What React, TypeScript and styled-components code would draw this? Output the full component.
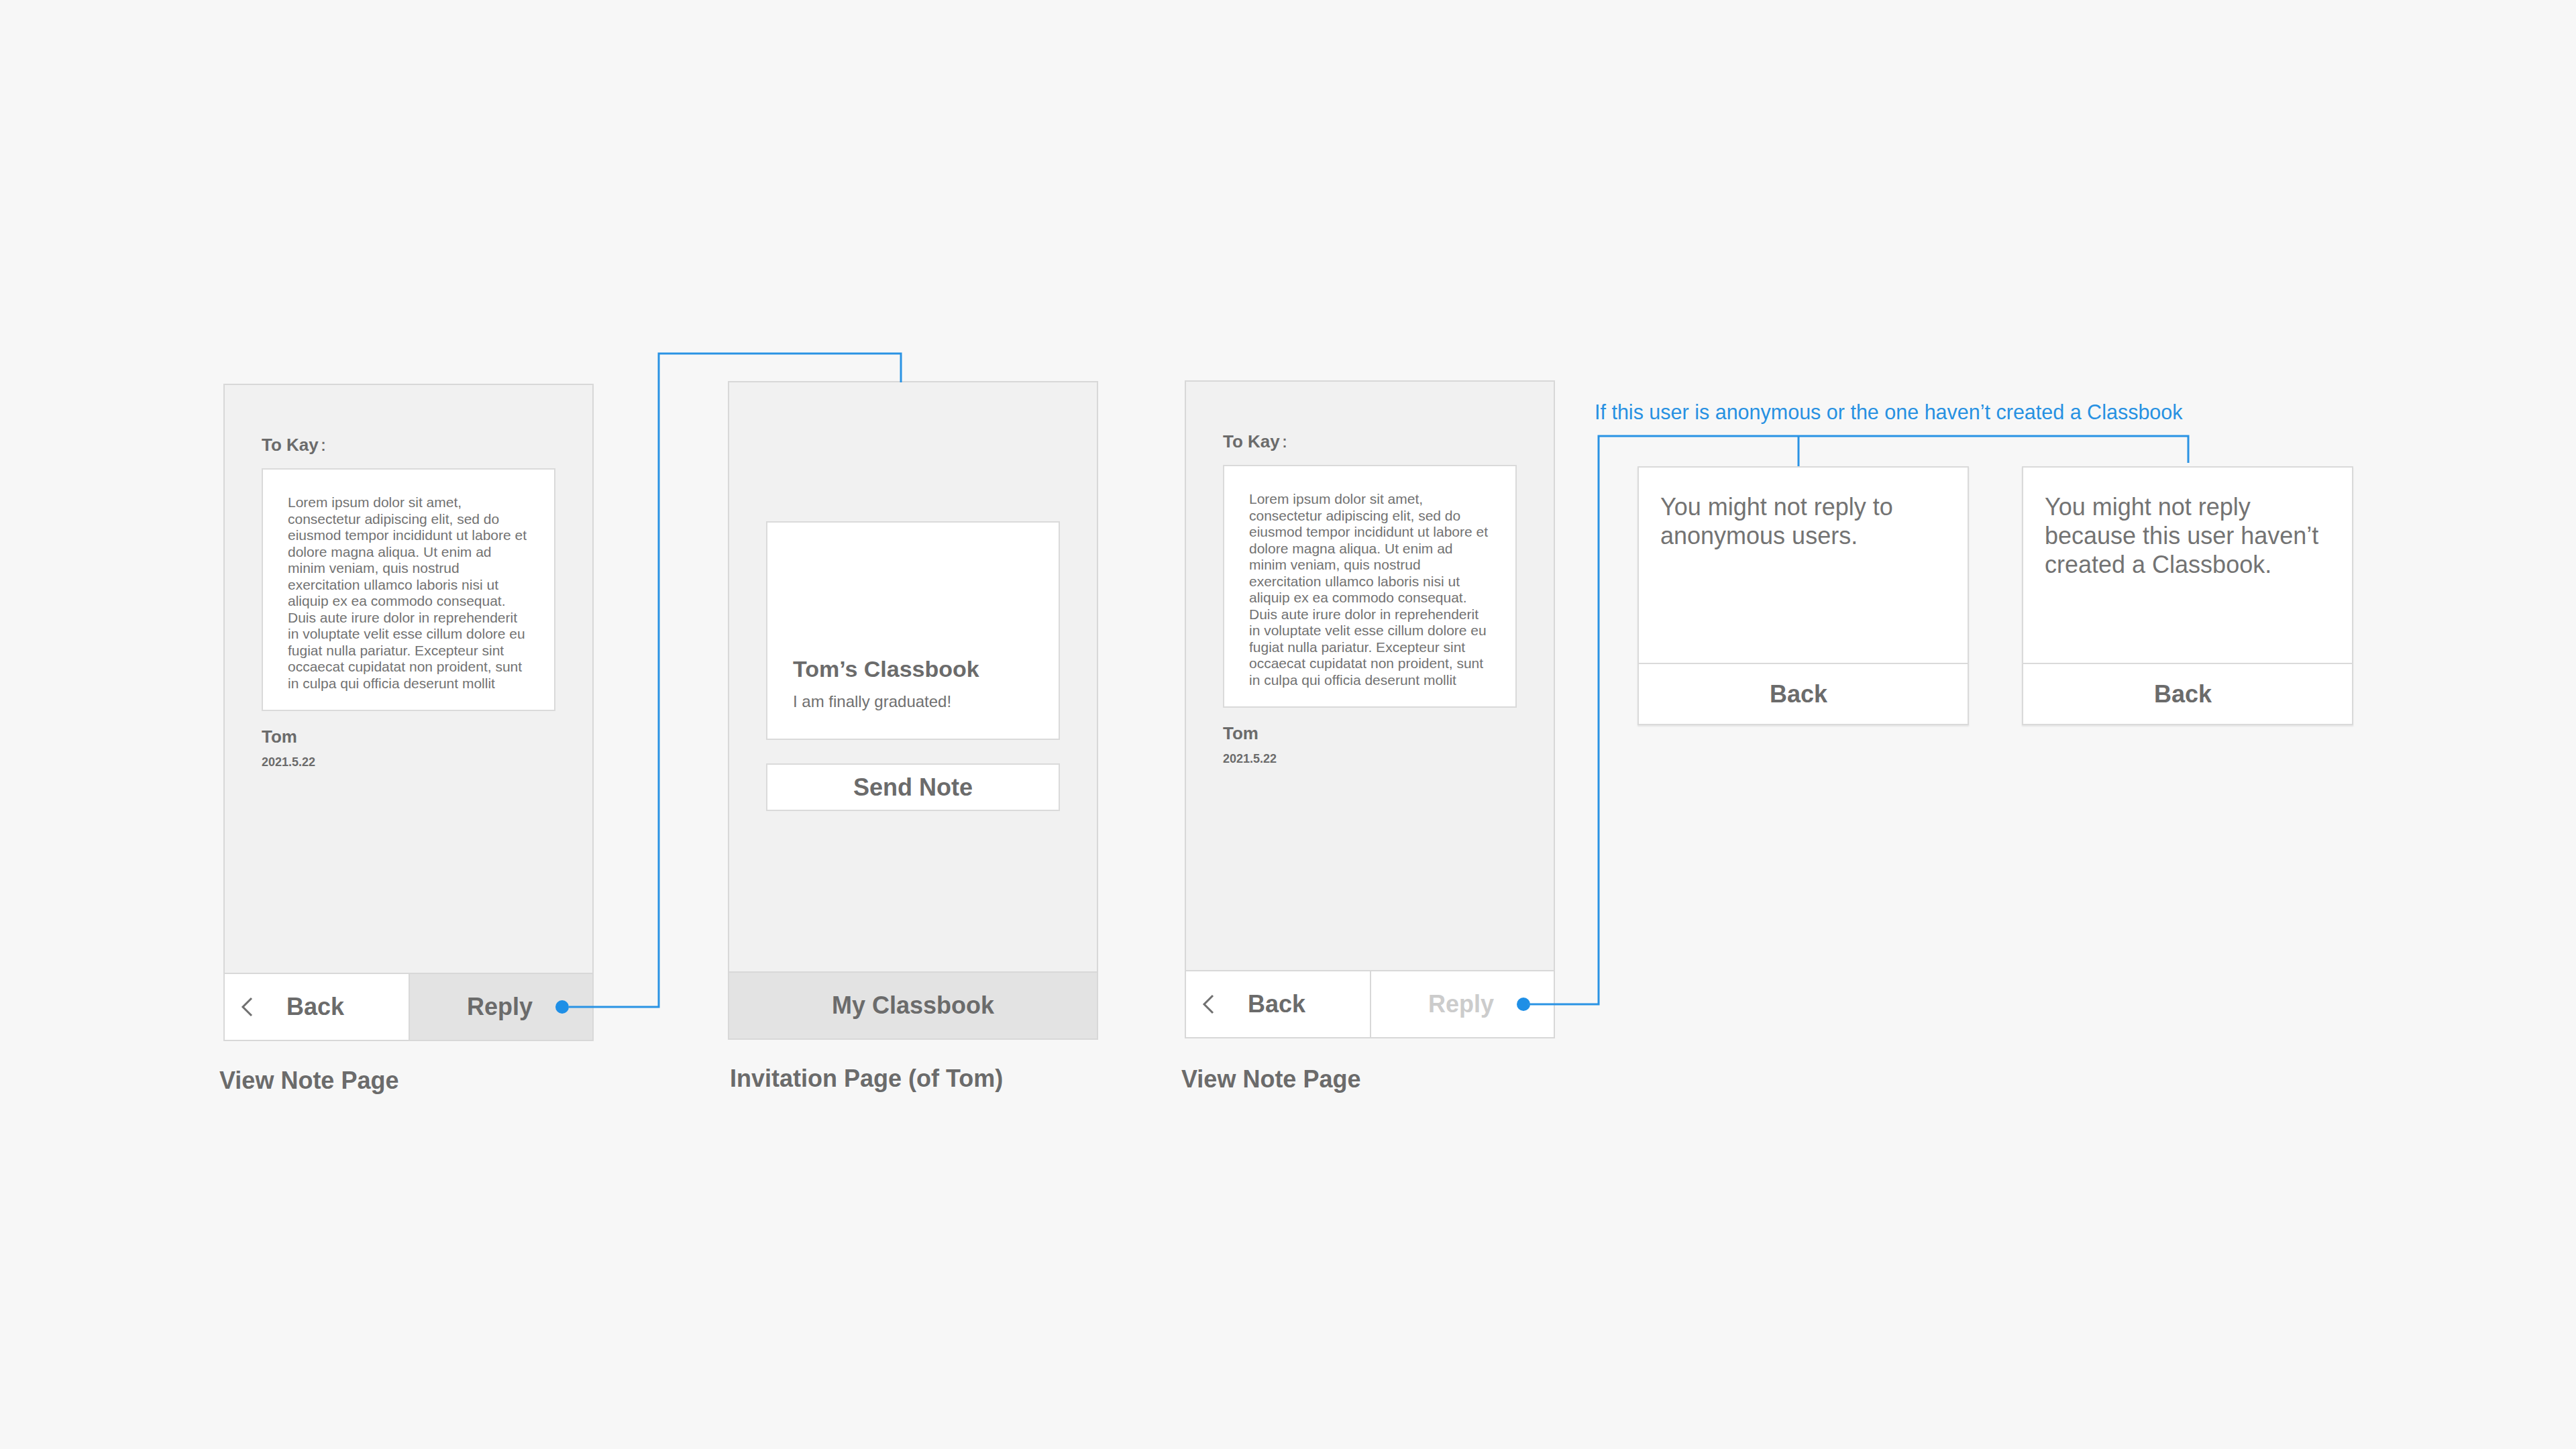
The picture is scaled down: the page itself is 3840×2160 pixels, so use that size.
import styled, { createGlobalStyle } from "styled-components";

const GlobalStyle = createGlobalStyle`
  html, body {
    margin: 0;
    padding: 0;
    background: #f7f7f7;
  }
  body {
    font-family: "Liberation Sans", Arial, sans-serif;
  }
`;

const LOREM = `Lorem ipsum dolor sit amet,
consectetur adipiscing elit, sed do
eiusmod tempor incididunt ut labore et
dolore magna aliqua. Ut enim ad
minim veniam, quis nostrud
exercitation ullamco laboris nisi ut
aliquip ex ea commodo consequat.
Duis aute irure dolor in reprehenderit
in voluptate velit esse cillum dolore eu
fugiat nulla pariatur. Excepteur sint
occaecat cupidatat non proident, sunt
in culpa qui officia deserunt mollit`;

function Chevron() {
  return (
    <svg width="18" height="30" viewBox="0 0 18 30">
      <polyline
        points="16,2 3,15 16,28"
        fill="none"
        stroke="#707070"
        strokeWidth="3"
      />
    </svg>
  );
}

function NotePage({
  top,
  height,
  replyMuted,
}: {
  top: number;
  height: number;
  replyMuted?: boolean;
}) {
  return (
    <Phone $top={top} $height={height}>
      <PhoneBody $padTop={74}>
        <ToLine>
          To Kay<Colon>：</Colon>
        </ToLine>
        <NoteBox>{LOREM}</NoteBox>
        <Author>Tom</Author>
        <NoteDate>2021.5.22</NoteDate>
      </PhoneBody>
      <SplitBar>
        <BarButton $bg="#ffffff" $align="flex-start">
          <Chevron />
          <BackText>Back</BackText>
        </BarButton>
        <BarButton
          $bg={replyMuted ? "#ffffff" : "#e3e3e3"}
          $align="flex-end"
          $divider
        >
          <ReplyText $muted={replyMuted}>Reply</ReplyText>
          <Dot />
        </BarButton>
      </SplitBar>
    </Phone>
  );
}

export default function App() {
  return (
    <Page>
      <GlobalStyle />
      <Row>
        <Column>
          <NotePage top={5} height={980} />
          <PageLabel $shift={-6} $gap={38}>View Note Page</PageLabel>
        </Column>

        <Column $ml={200}>
          <Phone $top={1} $height={982}>
            <PhoneBody $padTop={207}>
              <ClassbookCard>
                <CardTitle>Tom’s Classbook</CardTitle>
                <CardSubtitle>I am finally graduated!</CardSubtitle>
              </ClassbookCard>
              <SendButton>Send Note</SendButton>
            </PhoneBody>
            <FullBar>My Classbook</FullBar>
          </Phone>
          <PageLabel $shift={3} $gap={37}>Invitation Page (of Tom)</PageLabel>
        </Column>

        <Column $ml={129}>
          <NotePage top={0} height={981} replyMuted />
          <PageLabel $shift={-5} $gap={40}>View Note Page</PageLabel>
        </Column>

        <FlowColumn>
          <Annotation>
            If this user is anonymous or the one haven’t created a Classbook
          </Annotation>
          <CardRow>
            <MessageCard>
              <MessageText>You might not reply to anonymous users.</MessageText>
              <MessageFooter>Back</MessageFooter>
            </MessageCard>
            <MessageCard>
              <MessageText>
                You might not reply because this user haven’t created a
                Classbook.
              </MessageText>
              <MessageFooter>Back</MessageFooter>
            </MessageCard>
          </CardRow>
        </FlowColumn>
      </Row>

      <Connectors width="3840" height="2160" viewBox="0 0 3840 2160">
        <path d="M848 1501 H982 V527 H1343 V570" />
        <path d="M2277 1497 H2383 V650 H3262 V690" />
        <path d="M2681 650 V695" />
      </Connectors>
    </Page>
  );
}

const Page = styled.div`
  position: relative;
  width: 3840px;
  height: 2160px;
  background: #f7f7f7;
  overflow: hidden;
`;

const Row = styled.div`
  display: flex;
  align-items: flex-start;
  padding: 567px 0 0 333px;
`;

const Column = styled.div<{ $ml?: number }>`
  display: flex;
  flex-direction: column;
  margin-left: ${(p) => p.$ml ?? 0}px;
`;

const Phone = styled.div<{ $top: number; $height: number }>`
  box-sizing: border-box;
  width: 552px;
  height: ${(p) => p.$height}px;
  margin-top: ${(p) => p.$top}px;
  background: #f1f1f1;
  border: 2px solid #d8d8d8;
  display: flex;
  flex-direction: column;
`;

const PhoneBody = styled.div<{ $padTop: number }>`
  flex: 1;
  display: flex;
  flex-direction: column;
  padding: ${(p) => p.$padTop}px 55px 0;
`;

const ToLine = styled.div`
  font-size: 26px;
  line-height: 30px;
  font-weight: 700;
  color: #6b6b6b;
`;

const Colon = styled.span`
  margin-left: -6px;
  font-weight: 400;
`;

const NoteBox = styled.div`
  box-sizing: border-box;
  height: 362px;
  margin-top: 20px;
  padding: 37px 20px 0 37px;
  background: #ffffff;
  border: 2px solid #dadada;
  font-size: 21px;
  line-height: 24.5px;
  color: #727272;
  white-space: pre-line;
`;

const Author = styled.div`
  margin-top: 23px;
  font-size: 26px;
  line-height: 30px;
  font-weight: 700;
  color: #6b6b6b;
`;

const NoteDate = styled.div`
  margin-top: 12px;
  font-size: 18px;
  line-height: 22px;
  font-weight: 700;
  color: #6b6b6b;
`;

const SplitBar = styled.div`
  height: 98px;
  border-top: 2px solid #d8d8d8;
  display: grid;
  grid-template-columns: 1fr 1fr;
`;

const BarButton = styled.div<{ $bg: string; $align: string; $divider?: boolean }>`
  display: flex;
  align-items: center;
  justify-content: ${(p) => p.$align};
  background: ${(p) => p.$bg};
  border-left: ${(p) => (p.$divider ? "2px solid #d8d8d8" : "none")};
  padding: ${(p) => (p.$align === "flex-start" ? "0 0 0 24px" : "0 35px 0 0")};
  gap: ${(p) => (p.$align === "flex-start" ? "50px" : "34px")};
`;

const BackText = styled.span`
  font-size: 36px;
  font-weight: 700;
  color: #6b6b6b;
`;

const ReplyText = styled.span<{ $muted?: boolean }>`
  font-size: 36px;
  font-weight: 700;
  color: ${(p) => (p.$muted ? "#cccccc" : "#6b6b6b")};
`;

const Dot = styled.span`
  width: 20px;
  height: 20px;
  border-radius: 50%;
  background: #1f8fe6;
`;

const ClassbookCard = styled.div`
  box-sizing: border-box;
  height: 326px;
  padding: 0 38px 41px;
  background: #ffffff;
  border: 2px solid #dadada;
  display: flex;
  flex-direction: column;
  justify-content: flex-end;
`;

const CardTitle = styled.div`
  font-size: 34px;
  line-height: 40px;
  font-weight: 700;
  color: #6b6b6b;
`;

const CardSubtitle = styled.div`
  margin-top: 15px;
  font-size: 24px;
  line-height: 28px;
  color: #707070;
`;

const SendButton = styled.div`
  box-sizing: border-box;
  height: 71px;
  margin-top: 35px;
  background: #ffffff;
  border: 2px solid #dadada;
  display: flex;
  align-items: center;
  justify-content: center;
  font-size: 36px;
  font-weight: 700;
  color: #6b6b6b;
`;

const FullBar = styled.div`
  height: 98px;
  border-top: 2px solid #d8d8d8;
  background: #e3e3e3;
  display: flex;
  align-items: center;
  justify-content: center;
  font-size: 36px;
  font-weight: 700;
  color: #6b6b6b;
`;

const PageLabel = styled.div<{ $shift: number; $gap: number }>`
  margin: ${(p) => p.$gap}px 0 0 ${(p) => p.$shift}px;
  font-size: 36px;
  line-height: 42px;
  font-weight: 700;
  color: #6b6b6b;
`;

const FlowColumn = styled.div`
  display: flex;
  flex-direction: column;
  margin-left: 59px;
  padding-top: 30px;
`;

const Annotation = styled.div`
  font-size: 30.5px;
  line-height: 34px;
  color: #2791e2;
  white-space: nowrap;
`;

const CardRow = styled.div`
  display: flex;
  gap: 79px;
  margin-top: 64px;
  padding-left: 64px;
`;

const MessageCard = styled.div`
  box-sizing: border-box;
  width: 494px;
  height: 386px;
  background: #ffffff;
  border: 2px solid #dadada;
  box-shadow: 0 2px 2px rgba(0, 0, 0, 0.08);
  display: flex;
  flex-direction: column;
`;

const MessageText = styled.div`
  flex: 1;
  padding: 37px 30px 0 32px;
  font-size: 36px;
  line-height: 43px;
  color: #737373;
`;

const MessageFooter = styled.div`
  height: 89px;
  padding-right: 14px;
  border-top: 2px solid #dadada;
  display: flex;
  align-items: center;
  justify-content: center;
  font-size: 36px;
  font-weight: 700;
  color: #6b6b6b;
`;

const Connectors = styled.svg`
  position: absolute;
  top: 0;
  left: 0;
  pointer-events: none;

  path {
    fill: none;
    stroke: #2a93e4;
    stroke-width: 3;
  }
`;
